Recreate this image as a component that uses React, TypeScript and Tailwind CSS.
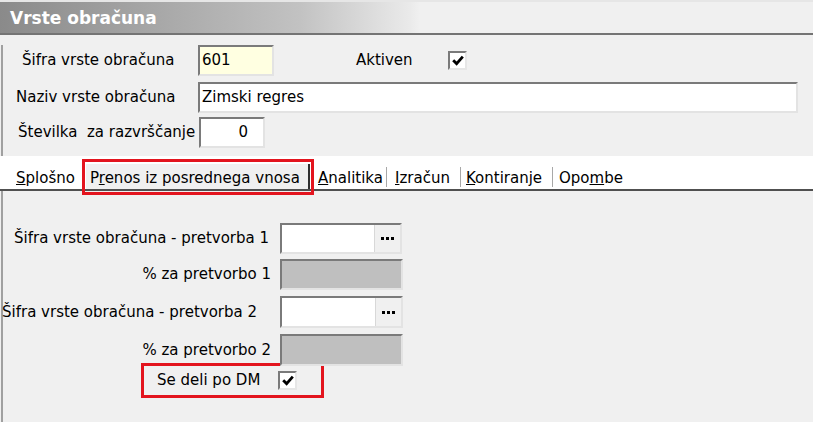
import React from "react";

const font = { fontFamily: '"DejaVu Sans", Verdana, sans-serif' };

function Sunken({
  className,
  children,
}: {
  className: string;
  children?: React.ReactNode;
}) {
  return (
    <div
      className={
        "border-2 border-t-[#7a7a7a] border-l-[#7a7a7a] border-b-[#e3e3e3] border-r-[#e3e3e3] " +
        className
      }
    >
      {children}
    </div>
  );
}

function Check() {
  return (
    <div className="w-[19px] h-[19px] bg-white border-2 border-t-[#7a7a7a] border-l-[#7a7a7a] border-b-[#e6e6e6] border-r-[#e6e6e6] flex items-center justify-center">
      <svg width="12" height="11" viewBox="0 0 12 11">
        <path d="M1.2 5.2 L4.6 8.6 L10.8 1.6" fill="none" stroke="#000" strokeWidth="2.8" />
      </svg>
    </div>
  );
}

function Ellipsis() {
  return (
    <div className="w-[26px] h-full bg-[#f0f0f0] border-l border-[#d8d8d8] flex items-center justify-center gap-[2px]">
      <span className="w-[3px] h-[3px] bg-black" />
      <span className="w-[3px] h-[3px] bg-black" />
      <span className="w-[3px] h-[3px] bg-black" />
    </div>
  );
}

function Sep() {
  return <div className="w-px h-[20px] bg-[#a8a8a8] mb-[2px]" />;
}

export default function App() {
  return (
    <div
      className="w-[813px] h-[422px] bg-[#f0f0f0] overflow-hidden text-[15px] text-black leading-none"
      style={font}
    >
      {/* Title bar */}
      <div className="h-[35px] border-t-[2px] border-[#e6e6e6] border-b-2 border-b-[#747474] bg-[linear-gradient(to_right,#8a8a8a_0px,#c2c2c2_300px,#eaeaea_410px,#f0f0f0_420px)] flex items-center pl-[10px]">
        <span className="text-white font-bold text-[17px] mt-[1px]">Vrste obračuna</span>
      </div>

      <div className="border-l-2 border-[#a0a0a0] ml-[1px] h-full">
        {/* Row 1 */}
        <div className="flex items-center mt-[10px] h-[31px]">
          <span className="ml-[19px] w-[176px]">Šifra vrste obračuna</span>
          <Sunken className="w-[76px] h-[31px] bg-[#ffffe1] flex items-center pl-[2px]">601</Sunken>
          <span className="ml-[82px] w-[92px]">Aktiven</span>
          <Check />
        </div>
        {/* Row 2 */}
        <div className="flex items-center mt-[6px] h-[31px]">
          <span className="ml-[13px] w-[182px]">Naziv vrste obračuna</span>
          <Sunken className="w-[600px] h-[31px] bg-white flex items-center pl-[2px]">Zimski regres</Sunken>
        </div>
        {/* Row 3 */}
        <div className="flex items-center mt-[4px] h-[31px]">
          <span className="ml-[15px] w-[181px] whitespace-pre">Številka  za razvrščanje</span>
          <Sunken className="w-[66px] h-[31px] bg-white flex items-center justify-end pr-[15px]">0</Sunken>
        </div>

        {/* Tabs */}
        <div className="mt-[8px] h-[35px] bg-white border-b-2 border-[#505050] flex items-end -ml-[3px]">
          <div className="ml-[10px] w-[74px] h-[25px] pl-[6px] pt-[3px] flex items-center">
            <span><u>S</u>plošno</span>
          </div>
          <div className="relative ml-[2px] w-[224px] h-[25px] bg-[#f0f0f0] border-r-2 border-[#303030] pl-[4px] pt-[3px] flex items-center">
            <span>P<u>r</u>enos iz posrednega vnosa</span>
            <span className="absolute -left-[4px] -right-[6px] -top-[5px] -bottom-[6px] border-[3px] border-[#e3141e]" />
          </div>
          <div className="w-[76px] h-[25px] pl-[8px] pt-[3px] flex items-center">
            <span><u>A</u>nalitika</span>
          </div>
          <Sep />
          <div className="w-[73px] h-[25px] pl-[8px] pt-[3px] flex items-center">
            <span><u>I</u>zračun</span>
          </div>
          <Sep />
          <div className="w-[91px] h-[25px] pl-[5px] pt-[3px] flex items-center">
            <span><u>K</u>ontiranje</span>
          </div>
          <Sep />
          <div className="h-[25px] pl-[6px] pt-[3px] flex items-center">
            <span>Opo<u>m</u>be</span>
          </div>
        </div>

        {/* Lower form */}
        <div className="flex items-center mt-[32px] h-[31px]">
          <span className="ml-[11px] w-[266px]">Šifra vrste obračuna - pretvorba 1</span>
          <Sunken className="w-[122px] h-[31px] bg-white flex justify-end">
            <Ellipsis />
          </Sunken>
        </div>
        <div className="flex items-center mt-[5px] h-[31px]">
          <span className="w-[277px] text-right pr-[9px]">% za pretvorbo 1</span>
          <Sunken className="w-[123px] h-[31px] bg-[#bfbfbf]" />
        </div>
        <div className="flex items-center mt-[6px] h-[32px]">
          <span className="-ml-[1px] w-[278px]">Šifra vrste obračuna - pretvorba 2</span>
          <Sunken className="w-[123px] h-[32px] bg-white flex justify-end">
            <Ellipsis />
          </Sunken>
        </div>
        <div className="flex items-center mt-[6px] h-[32px]">
          <span className="w-[277px] text-right pr-[9px]">% za pretvorbo 2</span>
          <Sunken className="w-[123px] h-[32px] bg-[#bfbfbf]" />
        </div>
        <div className="-mt-[3px] ml-[138px] w-[183px] h-[35px] border-[3px] border-[#e3141e] flex items-center pl-[13px]">
          <span className="w-[121px]">Se deli po DM</span>
          <Check />
        </div>
      </div>
    </div>
  );
}
